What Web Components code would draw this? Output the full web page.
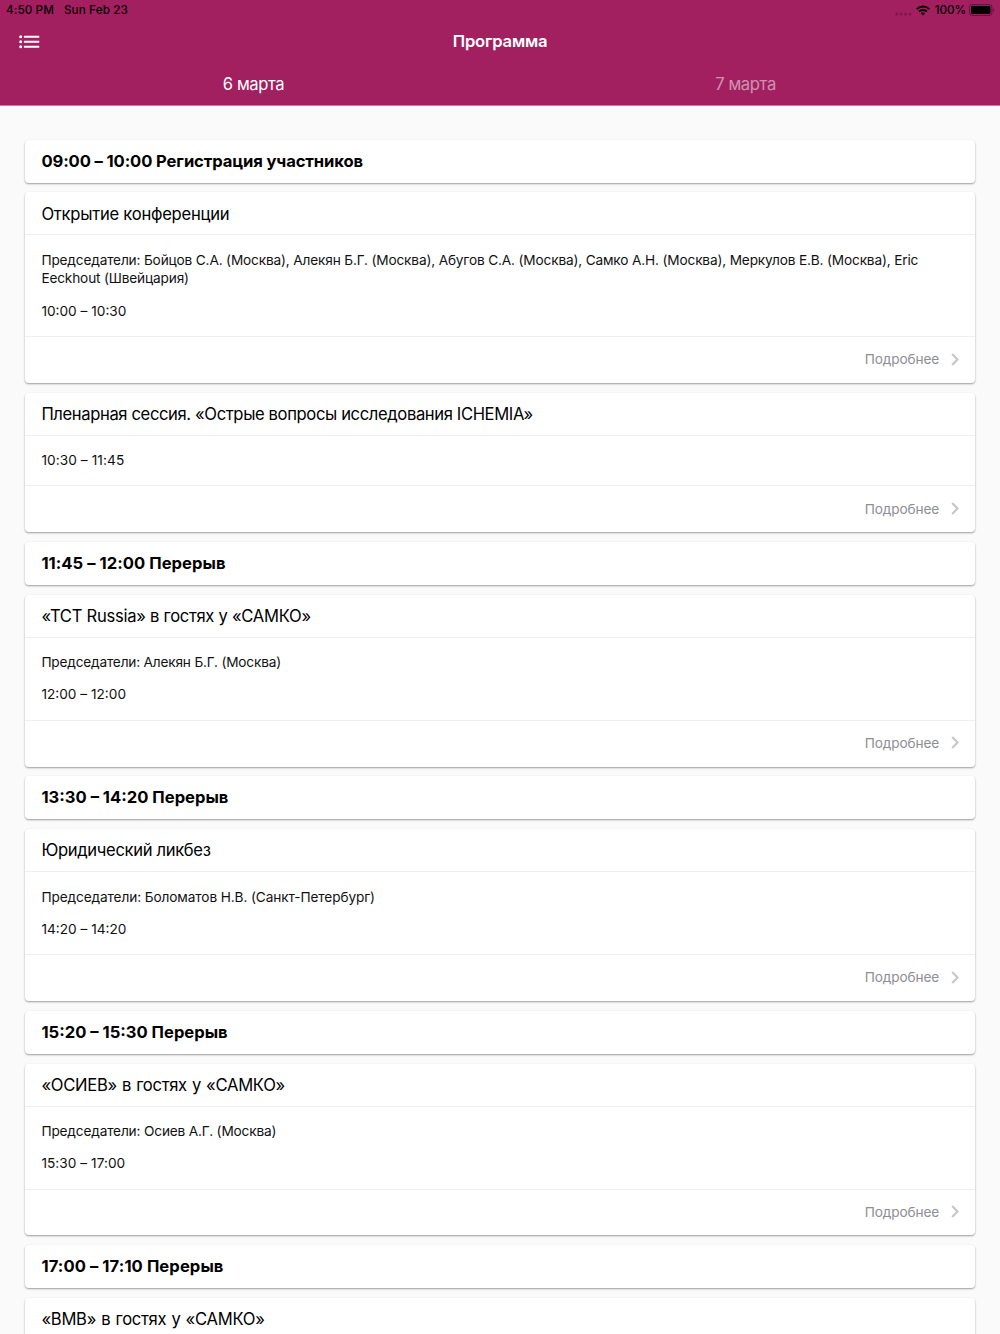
<!DOCTYPE html>
<html lang="ru">
<head>
<meta charset="utf-8">
<title>Программа</title>
<style>
  html, body {
    margin: 0;
    height: 1334px;
    overflow: hidden;
  }
  body {
    font-family: Inter, "Liberation Sans", sans-serif;
    background: #fafafa;
    color: #000;
  }
</style>
</head>
<body>
<program-page>
  <status-bar slot="top" time="4:50 PM" date="Sun Feb 23" battery="100%"></status-bar>
  <nav-bar slot="top">Программа</nav-bar>
  <day-tabs slot="top">
    <span aria-selected="true">6 марта</span>
    <span>7 марта</span>
  </day-tabs>

  <break-card style="letter-spacing: -0.11px">09:00 – 10:00 Регистрация участников</break-card>
  <session-card style="--title-tracking: -0.25px">
    <span slot="title">Открытие конференции</span>
    <p>Председатели: Бойцов С.А. (Москва), Алекян Б.Г. (Москва), Абугов С.А. (Москва), Самко А.Н. (Москва), Меркулов Е.В. (Москва), Eric Eeckhout (Швейцария)</p>
    <p class="time">10:00 – 10:30</p>
  </session-card>
  <session-card style="--title-tracking: -0.375px">
    <span slot="title">Пленарная сессия. «Острые вопросы исследования ICHEMIA»</span>
    <p class="time" style="letter-spacing: 0.08px">10:30 – 11:45</p>
  </session-card>
  <break-card style="letter-spacing: 0.04px">11:45 – 12:00 Перерыв</break-card>
  <session-card style="--title-tracking: -0.28px">
    <span slot="title">«TCT Russia» в гостях у «САМКО»</span>
    <p style="letter-spacing: -0.19px">Председатели: Алекян Б.Г. (Москва)</p>
    <p class="time">12:00 – 12:00</p>
  </session-card>
  <break-card>13:30 – 14:20 Перерыв</break-card>
  <session-card style="--title-tracking: -0.33px">
    <span slot="title">Юридический ликбез</span>
    <p style="letter-spacing: -0.11px">Председатели: Боломатов Н.В. (Санкт-Петербург)</p>
    <p class="time">14:20 – 14:20</p>
  </session-card>
  <break-card>15:20 – 15:30 Перерыв</break-card>
  <session-card style="--title-tracking: -0.28px; word-spacing: 0.7px">
    <span slot="title">«ОСИЕВ» в гостях у «САМКО»</span>
    <p style="word-spacing: 0">Председатели: Осиев А.Г. (Москва)</p>
    <p class="time" style="letter-spacing: 0.04px; word-spacing: 0">15:30 – 17:00</p>
  </session-card>
  <break-card style="letter-spacing: 0.08px">17:00 – 17:10 Перерыв</break-card>
  <session-card style="--title-tracking: -0.26px; word-spacing: 0.7px" collapsed>
    <span slot="title">«ВМВ» в гостях у «САМКО»</span>
  </session-card>
</program-page>

<script>
class BaseElement extends HTMLElement {
  constructor() {
    super()
    const template = document.createElement('template')
    template.innerHTML = this.template().trim()
    this.attachShadow({ mode: 'open' }).appendChild(template.content.cloneNode(true))
  }
}

window.customElements.define('program-page', class extends BaseElement {
  template() {
    return `
    <style>
      :host {
        display: flex;
        flex-direction: column;
        height: 1334px;
        overflow: hidden;
      }
      header {
        flex: none;
        height: 105px;
        background: #a21f60;
        border-bottom: 1px solid #c77ba0;
      }
      main {
        flex: 1;
        min-height: 0;
        display: flex;
        flex-direction: column;
        gap: 9.77px;
        padding: 33.75px 25.4px 0;
        overflow: hidden;
      }
    </style>
    <header><slot name="top"></slot></header>
    <main><slot></slot></main>
  `
  }
})

window.customElements.define('status-bar', class extends BaseElement {
  template() {
    return `
    <style>
      :host {
        display: flex;
        align-items: center;
        height: 20px;
        padding: 0 5px 0 6px;
        font-size: 11.7px;
        font-weight: 500;
        letter-spacing: 0.1px;
      }
      #date { margin-left: 10px; }
      .dots { margin-left: auto; margin-top: 7px; }
      .wifi { margin-left: 4px; }
      #battery { margin: 0 3px 0 5px; letter-spacing: -0.1px; }
      svg { display: block; flex: none; }
    </style>
    <span id="time"></span>
    <span id="date"></span>
    <svg class="dots" width="17" height="4" fill="#000" fill-opacity=".22">
      <circle cx="1.8" cy="2" r="1.5"/><circle cx="6.2" cy="2" r="1.5"/>
      <circle cx="10.6" cy="2" r="1.5"/><circle cx="15" cy="2" r="1.5"/>
    </svg>
    <svg class="wifi" width="14" height="11" viewBox="0 0 14 11" fill="none" stroke="#000" stroke-width="1.9">
      <path d="M.8 4.1a8.8 8.8 0 0 1 12.4 0"/>
      <path d="M3 6.6a5.7 5.7 0 0 1 8 0"/>
      <path d="M7 10.4 4.9 8.3a3 3 0 0 1 4.2 0Z" fill="#000" stroke="none"/>
    </svg>
    <span id="battery"></span>
    <svg width="26" height="12" viewBox="0 0 26 12">
      <rect x=".5" y=".6" width="22.4" height="10.8" rx="2.6" fill="none" stroke="#000" stroke-opacity=".4"/>
      <rect x="2" y="2.1" width="19.4" height="7.8" rx="1.3"/>
      <path d="M24 4.2a2 2 0 0 1 0 3.6Z" fill-opacity=".4"/>
    </svg>
  `
  }

  connectedCallback() {
    ['time', 'date', 'battery'].forEach(name => {
      this.shadowRoot.querySelector(`#${name}`).textContent = this.getAttribute(name)
    })
  }
})

window.customElements.define('nav-bar', class extends BaseElement {
  template() {
    return `
    <style>
      :host {
        display: grid;
        grid-template-columns: 60px 1fr 60px;
        align-items: center;
        height: 42px;
        margin-bottom: 1px;
        color: #fff;
      }
      svg { margin: 1px 0 0 19px; display: block; }
      .title {
        text-align: center;
        font-size: 16.6px;
        font-weight: 600;
        letter-spacing: -0.22px;
      }
    </style>
    <svg width="21" height="14" viewBox="0 0 21 14" fill="#fff">
      <circle cx="1.7" cy="1.7" r="1.5"/><circle cx="1.7" cy="6.7" r="1.5"/><circle cx="1.7" cy="11.7" r="1.5"/>
      <rect x="4.8" y=".8" width="15.6" height="1.9" rx=".8"/>
      <rect x="4.8" y="5.8" width="15.6" height="1.9" rx=".8"/>
      <rect x="4.8" y="10.8" width="15.6" height="1.9" rx=".8"/>
    </svg>
    <div class="title"><slot></slot></div>
  `
  }
})

window.customElements.define('day-tabs', class extends BaseElement {
  template() {
    return `
    <style>
      :host {
        display: flex;
        align-items: center;
        height: 42px;
        padding: 0 8.5px 0 7.5px;
        color: #fff;
        font-size: 16.6px;
        letter-spacing: -0.38px;
      }
      ::slotted(*) {
        flex: 1;
        text-align: center;
        opacity: 0.5;
      }
      ::slotted([aria-selected="true"]) { opacity: 1; }
    </style>
    <slot></slot>
  `
  }
})

window.customElements.define('break-card', class extends BaseElement {
  template() {
    return `
    <style>
      :host {
        flex: none;
        display: flex;
        align-items: center;
        height: 42.97px;
        box-sizing: border-box;
        padding: 0 16px 1px;
        background: #fff;
        border-radius: 4px;
        box-shadow: 0 1px 2px rgba(0, 0, 0, 0.38);
        font-size: 16.6px;
        font-weight: 700;
      }
    </style>
    <span><slot></slot></span>
  `
  }
})

window.customElements.define('session-card', class extends BaseElement {
  template() {
    return `
    <style>
      :host {
        flex: none;
        display: block;
        background: #fff;
        border-radius: 4px;
        box-shadow: 0 1px 2px rgba(0, 0, 0, 0.38);
      }
      .header {
        display: flex;
        align-items: center;
        height: 42.97px;
        box-sizing: border-box;
        padding: 0 16px 0.5px;
        font-size: 16.6px;
        letter-spacing: var(--title-tracking, 0);
        box-shadow: inset 0 -1px #efeff0;
      }
      .content {
        padding: 15.4px 16px 15.85px;
        font-size: 13.67px;
        line-height: 18.56px;
        letter-spacing: -0.163px;
        color: #111;
        display: flex;
        flex-direction: column;
        gap: 13.67px;
      }
      ::slotted(p) { margin: 0; }
      ::slotted(.time) { letter-spacing: 0; }
      .footer {
        display: flex;
        align-items: center;
        justify-content: flex-end;
        gap: 12px;
        height: 46.9px;
        box-sizing: border-box;
        padding: 0 15.5px 0.7px;
        color: #8e8e93;
        font-size: 13.67px;
        letter-spacing: -0.13px;
        box-shadow: inset 0 1px #efeff0;
      }
      :host([collapsed]) .footer { display: none; }
      svg { display: block; }
    </style>
    <div class="header"><slot name="title"></slot></div>
    <div class="content"><slot></slot></div>
    <div class="footer">
      <span>Подробнее</span>
      <svg width="8" height="13" viewBox="0 0 8 13" fill="none" stroke="#c7c7cc" stroke-width="2.3">
        <path d="M1.2 1l5.3 5.5L1.2 12"/>
      </svg>
    </div>
  `
  }
})
</script>
</body>
</html>
